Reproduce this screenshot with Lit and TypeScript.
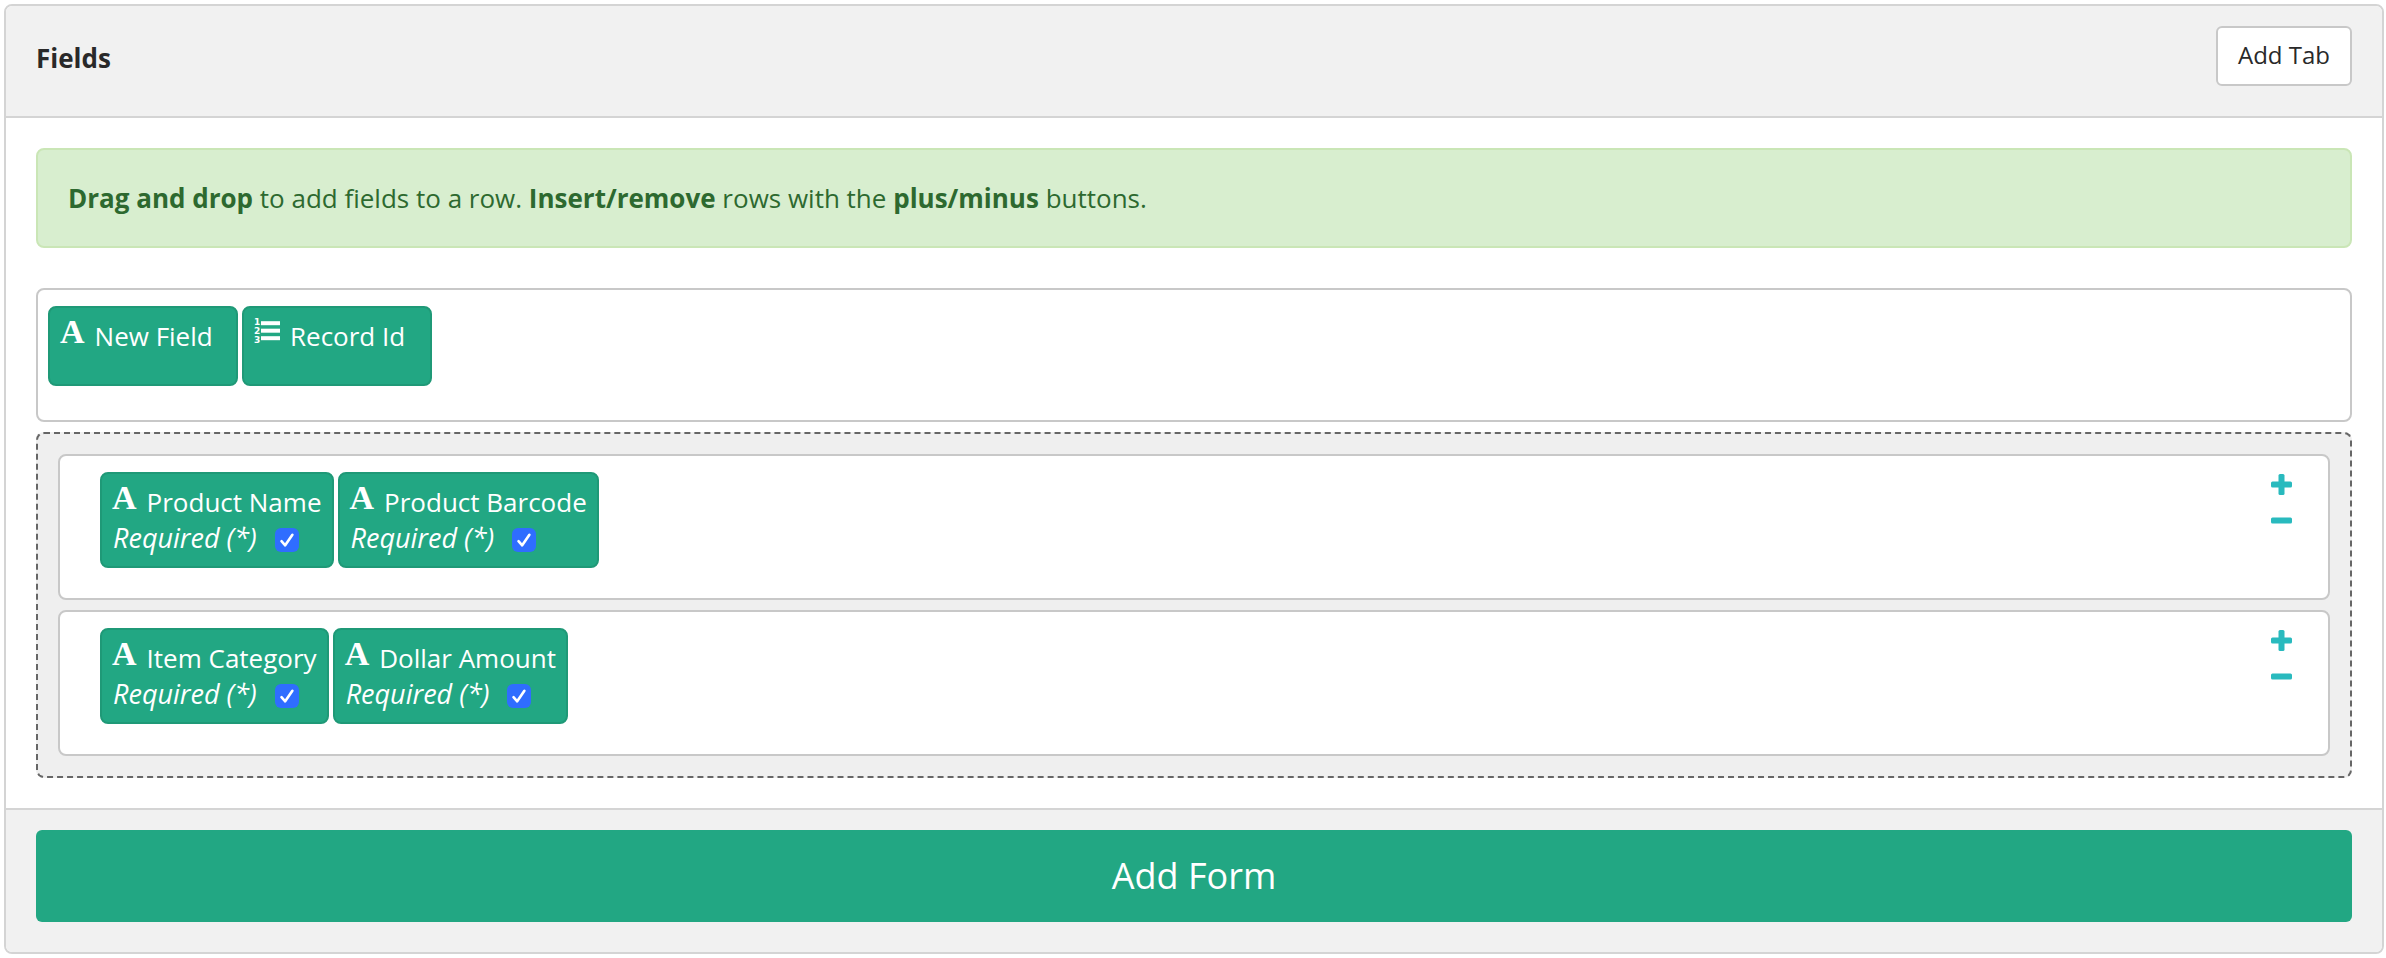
import { LitElement, html, css, svg, nothing } from "lit";
import { customElement, property } from "lit/decorators.js";

type FieldKind = "text" | "list";

interface Field {
  name: string;
  kind: FieldKind;
  required?: boolean;
}

const UNPLACED: Field[] = [
  { name: "New Field", kind: "text" },
  { name: "Record Id", kind: "list" },
];

const ROWS: Field[][] = [
  [
    { name: "Product Name", kind: "text", required: true },
    { name: "Product Barcode", kind: "text", required: true },
  ],
  [
    { name: "Item Category", kind: "text", required: true },
    { name: "Dollar Amount", kind: "text", required: true },
  ],
];

@customElement("field-tag")
export class FieldTag extends LitElement {
  @property({ attribute: false }) field!: Field;

  static styles = css`
    :host {
      display: block;
      box-sizing: border-box;
      min-width: 190px;
      min-height: 80px;
      padding: 10px;
      border: 2px solid #1f9977;
      border-radius: 8px;
      background: #22a783;
      color: #fff;
      line-height: 36px;
      cursor: move;
    }
    .name {
      display: flex;
      gap: 10px;
      white-space: nowrap;
    }
    .letter {
      font: bold 34px/28px "Liberation Serif", serif;
    }
    .list {
      display: block;
      width: 26px;
      height: 28px;
      overflow: visible;
    }
    .digit {
      font: bold 9px "DejaVu Sans", sans-serif;
    }
    .required {
      display: flex;
      align-items: center;
      gap: 18px;
      padding-left: 1px;
      font-size: 27px;
      font-style: italic;
      white-space: nowrap;
    }
    .check {
      appearance: none;
      width: 24px;
      height: 24px;
      margin: 4px 0 0;
      border-radius: 6px;
      background: #2f6dff;
    }
    .check:checked {
      background: #2f6dff
        url("data:image/svg+xml,%3Csvg xmlns='http://www.w3.org/2000/svg' viewBox='0 0 24 24' fill='none' stroke='white' stroke-width='2.6' stroke-linecap='round' stroke-linejoin='round'%3E%3Cpath d='M6.5 13.2 L10.2 17.3 L17.4 6.8'/%3E%3C/svg%3E")
        center / 100% no-repeat;
    }
  `;

  private icon() {
    if (this.field.kind === "text") {
      return html`<span class="letter" aria-hidden="true">A</span>`;
    }
    return html`<svg class="list" viewBox="0 0 26 28" fill="currentColor" aria-hidden="true">
      ${[0, 1, 2].map(
        (i) => svg`
          <text class="digit" x="0" y=${7 + i * 9}>${i + 1}</text>
          <rect x="7" y=${3.2 + i * 7.5} width="19" height="4"></rect>`,
      )}
    </svg>`;
  }

  render() {
    return html`
      <div class="name">${this.icon()}<span>${this.field.name}</span></div>
      ${this.field.required
        ? html`<label class="required">
            Required (*)
            <input class="check" type="checkbox" .checked=${true} />
          </label>`
        : nothing}
    `;
  }
}

@customElement("app-root")
export class AppRoot extends LitElement {
  static styles = css`
    :host {
      display: block;
      padding: 4px 2px 4px 4px;
      background: #fff;
      color: #292929;
      font: 26px/36px "Open Sans", sans-serif;
    }
    .panel {
      border: 2px solid #d4d4d4;
      border-radius: 8px;
      overflow: hidden;
    }
    .header {
      display: flex;
      justify-content: space-between;
      align-items: flex-start;
      padding: 20px 30px 26px;
      border-bottom: 2px solid #d4d4d4;
      background: #f1f1f1;
    }
    .title {
      margin: 0;
      font-size: 26px;
      font-weight: 700;
      line-height: 64px;
    }
    button {
      margin: 0;
      font-family: inherit;
      cursor: pointer;
    }
    .add-tab {
      padding: 9px 20px 11px;
      border: 2px solid #c8c8c8;
      border-radius: 6px;
      background: #fff;
      color: #292929;
      font-size: 24px;
      line-height: 36px;
    }
    .body {
      padding: 30px;
    }
    .hint {
      margin: 0 0 40px;
      padding: 30px;
      border: 2px solid #cae6b6;
      border-radius: 8px;
      background: #d8eecf;
      color: #2d692f;
    }
    .row {
      display: flex;
      align-items: flex-start;
      gap: 4px;
      border: 2px solid #c8c8c8;
      border-radius: 8px;
      background: #fff;
    }
    .pool {
      padding: 16px 10px 34px;
    }
    .rows {
      display: flex;
      flex-direction: column;
      gap: 10px;
      margin-top: 10px;
      padding: 20px;
      border: 2px dashed #666;
      border-radius: 8px;
      background: #efefef;
    }
    .rows .row {
      padding: 16px 28px 30px 40px;
    }
    .tools {
      display: flex;
      flex-direction: column;
      margin: -6px 0 0 auto;
    }
    .tool {
      width: 37px;
      height: 36px;
      padding: 0 8px;
      border: 0;
      background: none;
      color: #29babe;
    }
    .tool svg {
      display: block;
      width: 21px;
      height: 21px;
    }
    .footer {
      padding: 20px 30px 30px;
      border-top: 2px solid #d4d4d4;
      background: #f1f1f1;
    }
    .add-form {
      display: block;
      width: 100%;
      padding: 20px;
      border: 0;
      border-radius: 6px;
      background: #22a783;
      color: #fff;
      font-size: 36px;
      line-height: 52px;
    }
  `;

  private tool(label: string, plus: boolean) {
    return html`<button class="tool" type="button" aria-label=${label}>
      <svg viewBox="0 0 21 21" fill="currentColor" aria-hidden="true">
        <rect y="7.5" width="21" height="6" rx="1.5"></rect>
        ${plus ? svg`<rect x="7.5" width="6" height="21" rx="1.5"></rect>` : nothing}
      </svg>
    </button>`;
  }

  render() {
    return html`
      <section class="panel">
        <header class="header">
          <h2 class="title">Fields</h2>
          <button class="add-tab" type="button">Add Tab</button>
        </header>
        <div class="body">
          <p class="hint">
            <strong>Drag and drop</strong> to add fields to a row.
            <strong>Insert/remove</strong> rows with the
            <strong>plus/minus</strong> buttons.
          </p>
          <div class="row pool">
            ${UNPLACED.map((f) => html`<field-tag .field=${f}></field-tag>`)}
          </div>
          <div class="rows">
            ${ROWS.map(
              (row) => html`<div class="row">
                ${row.map((f) => html`<field-tag .field=${f}></field-tag>`)}
                <div class="tools">
                  ${this.tool("Insert row", true)}${this.tool("Remove row", false)}
                </div>
              </div>`,
            )}
          </div>
        </div>
        <footer class="footer">
          <button class="add-form" type="button">Add Form</button>
        </footer>
      </section>
    `;
  }
}
